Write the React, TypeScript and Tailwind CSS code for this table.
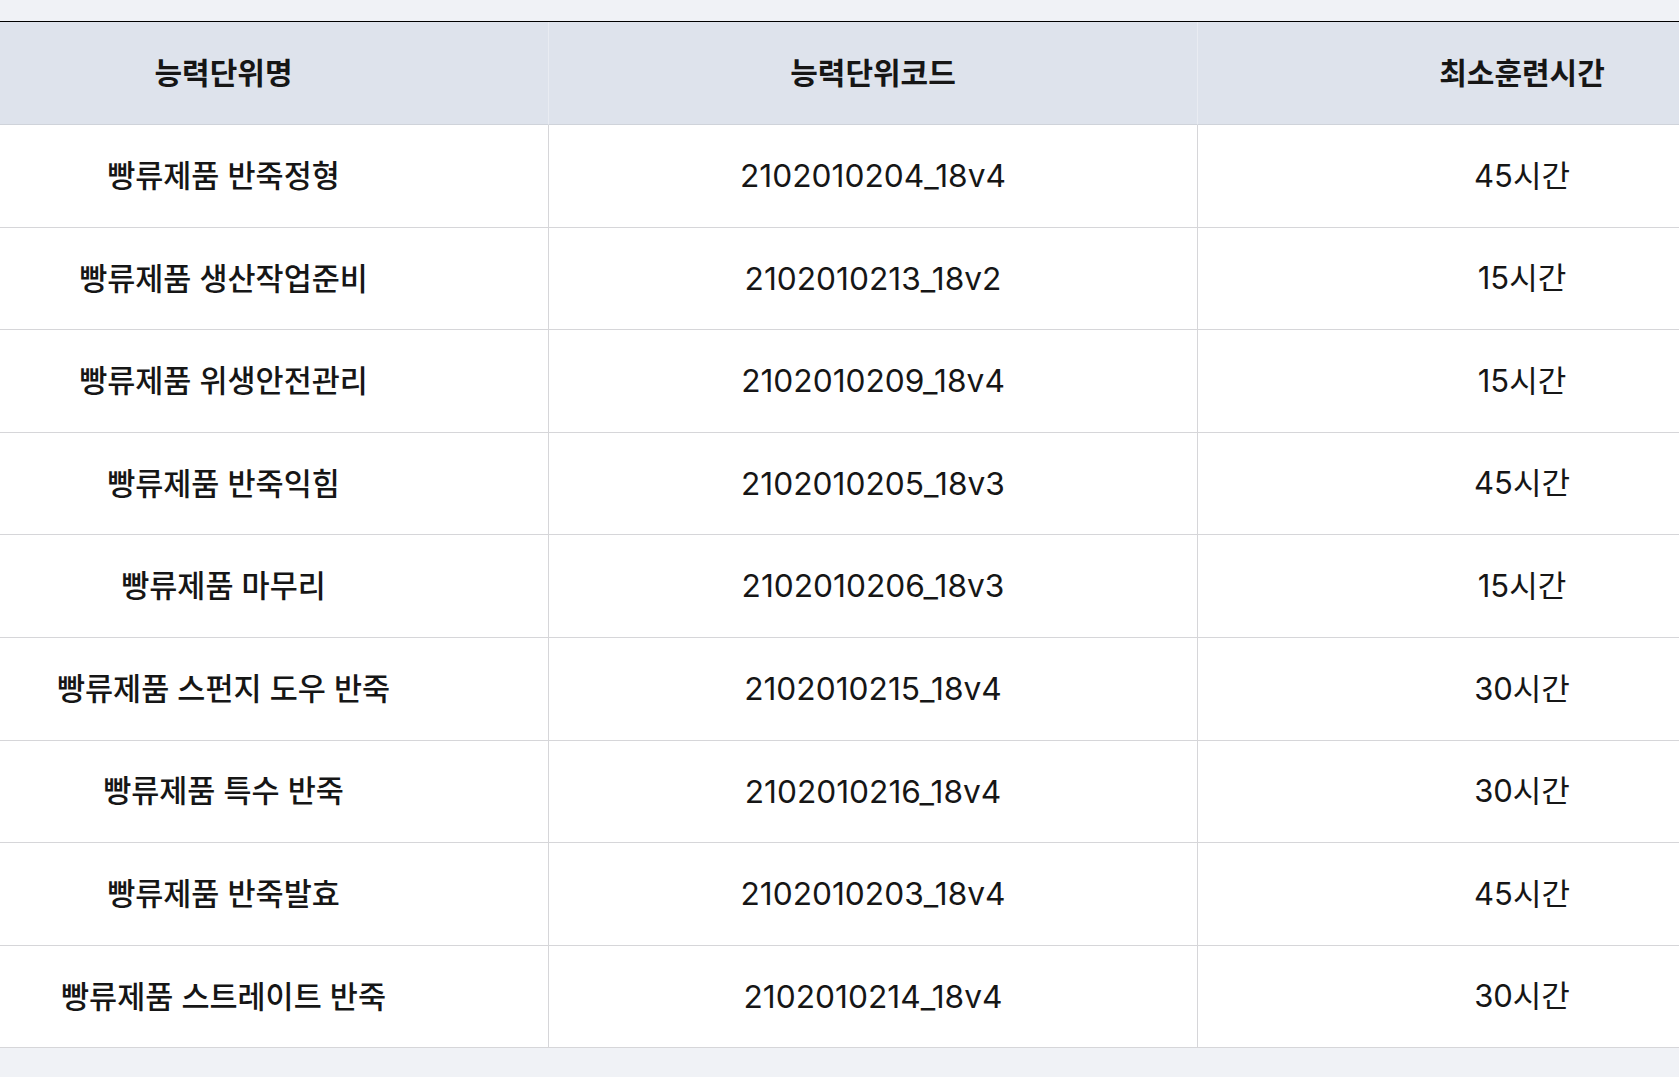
const ROWS = [
  { name: '빵류제품 반죽정형', code: '2102010204_18v4', hours: '45시간' },
  { name: '빵류제품 생산작업준비', code: '2102010213_18v2', hours: '15시간' },
  { name: '빵류제품 위생안전관리', code: '2102010209_18v4', hours: '15시간' },
  { name: '빵류제품 반죽익힘', code: '2102010205_18v3', hours: '45시간' },
  { name: '빵류제품 마무리', code: '2102010206_18v3', hours: '15시간' },
  { name: '빵류제품 스펀지 도우 반죽', code: '2102010215_18v4', hours: '30시간' },
  { name: '빵류제품 특수 반죽', code: '2102010216_18v4', hours: '30시간' },
  { name: '빵류제품 반죽발효', code: '2102010203_18v4', hours: '45시간' },
  { name: '빵류제품 스트레이트 반죽', code: '2102010214_18v4', hours: '30시간' },
]

const HEADERS = ['능력단위명', '능력단위코드', '최소훈련시간']

export default function App() {
  return (
    <div
      className="h-[1077px] w-full overflow-hidden bg-[#f0f2f6] pt-[21px] text-[#161616]"
      style={{ fontFamily: 'Inter, "Noto Sans CJK KR", "Noto Sans", sans-serif' }}
    >
      <div className="ml-[-101px] w-[1947px]">
        <div className="grid grid-cols-3 border-t border-black bg-[#dee3ec]">
          {HEADERS.map((h, i) => (
            <div
              key={h}
              className={`flex h-[103px] items-center justify-center border-b border-[#cfd3da] text-[30px] font-bold ${
                i > 0 ? 'border-l border-l-[#e9ecf2]' : ''
              }`}
            >
              {h}
            </div>
          ))}
        </div>
        {ROWS.map((r) => (
          <div key={r.code} className="grid grid-cols-3 border-b border-[#d6d6d9] bg-white text-[30.5px]">
            <div className="flex h-[101.6px] items-center justify-center font-medium">{r.name}</div>
            <div className="flex items-center justify-center border-l border-[#d6d6d9] text-[31.7px]">
              {r.code}
            </div>
            <div className="flex items-center justify-center border-l border-[#d6d6d9] text-[31px]">{r.hours}</div>
          </div>
        ))}
      </div>
    </div>
  )
}
